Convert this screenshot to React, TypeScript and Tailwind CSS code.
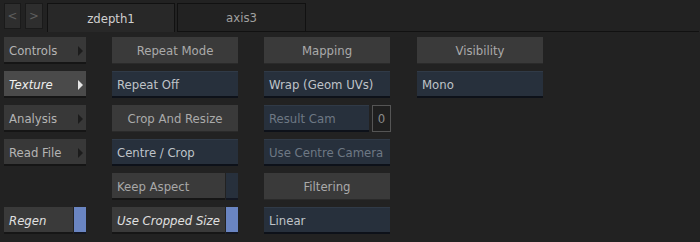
import React from 'react';

const font = { fontFamily: '"DejaVu Sans Condensed", "DejaVu Sans", sans-serif' };

const Arrow = ({ active }: { active?: boolean }) => (
  <span
    className={`w-0 h-0 border-y-[5px] border-y-transparent border-l-[5px] ${
      active ? 'border-l-[#e6e6e6]' : 'border-l-[#1c1c1c]'
    }`}
  />
);

const NavButton = ({ label, active }: { label: string; active?: boolean }) => (
  <div
    className={`h-[27px] w-[82px] flex items-center justify-between pl-[5px] pr-[3px] pt-[2px] border-b-2 border-[#151515] ${
      active ? 'bg-[#4a4a4a] text-[#f0f0f0] italic' : 'bg-[#383838] text-[#b4b4b4]'
    }`}
  >
    <span>{label}</span>
    <Arrow active={active} />
  </div>
);

const Header = ({ label }: { label: string }) => (
  <div className="h-[27px] w-[126px] flex items-center justify-center pt-[2px] bg-[#3a3a3a] text-[#aaaaaa] border-b border-[#2a2a2a]">
    {label}
  </div>
);

const Field = ({ label, dim, w = 'w-[126px]' }: { label: string; dim?: boolean; w?: string }) => (
  <div
    className={`h-[27px] ${w} flex items-center pl-[5px] pt-[1px] bg-[#27303c] border-t border-[#303a47] border-b-2 border-b-[#0d1119] ${
      dim ? 'text-[#6e7884]' : 'text-[#bfc3c8]'
    }`}
  >
    {label}
  </div>
);

const Toggle = ({ label, on, w, italic }: { label: string; on?: boolean; w: string; italic?: boolean }) => (
  <div className={`h-[27px] ${w} flex`}>
    <div
      className={`flex-1 flex items-center pl-[5px] pt-[2px] bg-[#3a3a3a] border-b-2 border-[#161616] ${
        italic ? 'italic text-[#e0e0e0]' : 'text-[#a8a8a8]'
      }`}
    >
      {label}
    </div>
    <div className={`w-[12px] ml-[1px] ${on ? 'bg-[#6a85c2]' : 'bg-[#27303c]'} border-b-2 border-[#131722]`} />
  </div>
);

export default function App() {
  return (
    <div className="w-[700px] h-[242px] bg-[#222222] text-[13px] overflow-hidden" style={font}>
      {/* tab bar */}
      <div className="flex items-end h-[32px] pt-[3px] pl-[4px]">
        <div className="flex gap-[4px] self-start">
          <div className="w-[17px] h-[26px] bg-[#2e2e2e] border border-[#1a1a1a] flex items-center justify-center text-[#5e5e5e]">&lt;</div>
          <div className="w-[18px] h-[26px] bg-[#2e2e2e] border border-[#1a1a1a] flex items-center justify-center text-[#5e5e5e]">&gt;</div>
        </div>
        <div className="ml-[4px] w-[128px] h-[29px] bg-[#282828] border-x border-t border-[#111111] flex items-center justify-center pt-[1px] text-[#d0d0d0]">
          zdepth1
        </div>
        <div className="ml-[2px] w-[129px] h-[29px] bg-[#222222] border border-[#111111] flex items-center justify-center pt-[1px] text-[#a0a0a0]">
          axis3
        </div>
        <div className="w-[393px] border-b border-[#111111]" />
      </div>

      {/* body */}
      <div className="flex gap-[26px] px-[4px] pt-[5px]">
        <div className="flex flex-col gap-[7px]">
          <NavButton label="Controls" />
          <NavButton label="Texture" active />
          <NavButton label="Analysis" />
          <NavButton label="Read File" />
          <div className="h-[27px]" />
          <Toggle label="Regen" on italic w="w-[82px]" />
        </div>
        <div className="flex flex-col gap-[7px]">
          <Header label="Repeat Mode" />
          <Field label="Repeat Off" />
          <Header label="Crop And Resize" />
          <Field label="Centre / Crop" />
          <Toggle label="Keep Aspect" w="w-[126px]" />
          <Toggle label="Use Cropped Size" on italic w="w-[126px]" />
        </div>
        <div className="flex flex-col gap-[7px]">
          <Header label="Mapping" />
          <Field label="Wrap (Geom UVs)" />
          <div className="flex gap-[3px]">
            <Field label="Result Cam" dim w="w-[105px]" />
            <div className="w-[19px] h-[27px] border border-[#555555] bg-[#1f1f1f] flex items-center justify-center pt-[1px] text-[#8a8a8a]">0</div>
          </div>
          <Field label="Use Centre Camera" dim />
          <Header label="Filtering" />
          <Field label="Linear" />
        </div>
        <div className="flex flex-col gap-[7px]">
          <Header label="Visibility" />
          <Field label="Mono" />
        </div>
      </div>
    </div>
  );
}
